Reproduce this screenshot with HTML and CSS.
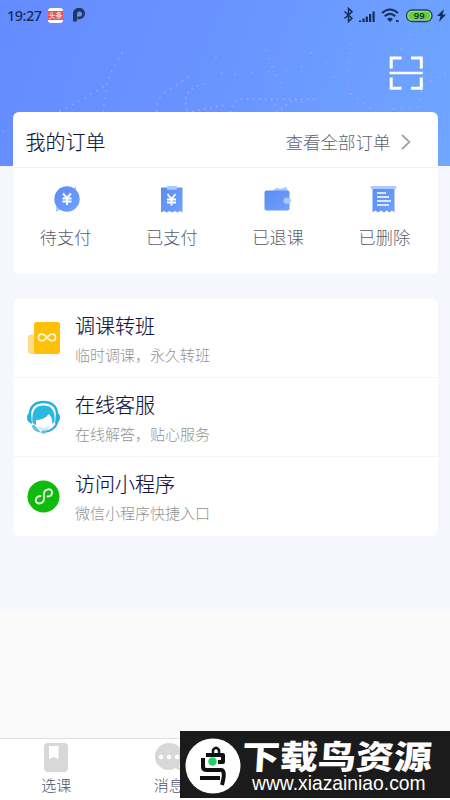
FILE: index.html
```html
<!DOCTYPE html>
<html lang="zh-CN">
<head>
<meta charset="utf-8">
<title>我的订单</title>
<link rel="stylesheet" href="styles.css">
</head>
<body>
<header class="hero">
  <svg class="sparkles" viewBox="0 0 450 166" aria-hidden="true">
    <g fill="none" stroke-linecap="round">
      <path class="pink" stroke-dasharray="0 7" d="M60 111Q84 99 106 85"/>
      <path class="pink" stroke-dasharray="0 7" d="M103 112L107 82L112 70L124 50"/>
      <path class="pink" stroke-dasharray="0 7" d="M157 111Q155 98 170 89L192 75"/>
      <path class="pink" stroke-dasharray="0 6" d="M187 110Q180 89 204 84M193 111L225 105"/>
      <path class="pink" stroke-dasharray="0 6" d="M231 112Q233 97 248 99H316M272 100L278 112L292 100L306 103"/>
      <path class="faint" stroke-dasharray="0 9" d="M266 50Q272 69 283 87M350 44L348 88"/>
      <path class="pink" stroke-dasharray="0 8" d="M351 94L372 109M394 109L418 107L423 84L449 72"/>
      <path class="faint" stroke-dasharray="0 17" d="M216 57L224 80M235 74L300 69L320 40M326 62L339 86M410 35L391 66L400 94M3 131L12 128"/>
    </g>
  </svg>
  <div class="status">
    <time>19:27</time>
    <span class="news">头条</span>
    <svg class="p-logo" viewBox="0 0 12 14"><path d="M0 13.500V6A6 5.800 0 1 1 6 11.300H4.500V8.500H6A2.500 2.500 0 1 0 4 6V13.500Z" fill="#223765"/></svg>
    <svg class="signals" viewBox="0 0 104 18">
      <g fill="none" stroke="#172d52" stroke-width="1.5">
        <path d="M1.500 5.500L9 12.200L5.500 15.500V2.500L9 5.800L1.500 12.500"/>
        <path d="M39 7Q47 0 55 7M41.700 10.200Q47 5.500 52.300 10.200" stroke-width="2"/>
      </g>
      <path fill="#172d52" d="M16 14.500h2.200V16H16zM19.400 12.500h2.200V16h-2.200zM22.700 10.500h2.200V16h-2.200zM26 8h2.200v8H26zM29.500 5.500h2.200V16h-2.200zM44 13Q47 10.500 50 13L47 16zM53 14h2.500v2H53zM101 3L94 10h3.500L96 16l7-7.500h-3.500z"/>
      <rect x="63.500" y="4" width="25.500" height="11.500" rx="5.500" fill="#a3cbb3" stroke="#23444f" stroke-width="1.300"/>
      <rect x="65.500" y="6" width="21.500" height="7.500" rx="3.700" fill="#62d329"/>
      <text x="76.200" y="13.400" text-anchor="middle">99</text>
    </svg>
  </div>
  <svg class="scan" viewBox="0 0 34 34" fill="none" stroke="#fff" stroke-width="3"><path d="M2.200 12.500V2H12.500M22 2H32.300V12.500M2.200 21.500V32.300H12.500M22 32.300H32.300V21.500"/><path d="M.5 17H33.800" stroke-width="2.600"/></svg>
</header>

<main>
  <section class="card orders">
    <div class="order-head">
      <h2>我的订单</h2>
      <a>查看全部订单<svg viewBox="0 0 10 16"><path d="M1 1L8.500 8L1 15" fill="none" stroke="#a2a3ad" stroke-width="1.800"/></svg></a>
    </div>
    <div class="order-grid">
      <div class="order">
        <svg viewBox="0 0 28 28"><path d="M24 1V9H18M4 17V27L11 23" fill="#a9cbff"/><circle cx="15" cy="14" r="12.700" fill="url(#blue)"/><path class="yen" d="M11 8.500L15 13L19 8.500M10.500 13.500H19.500M10.500 16.500H19.500M15 13V20"/></svg>
        <span>待支付</span>
      </div>
      <div class="order">
        <svg viewBox="0 0 28 28"><path d="M3 2.500H24.500V27.500L22 26L19.500 27.500L17 26L14 27.500L11.500 26L9 27.500L6 26L3 27.500Z" fill="url(#blue)"/><rect x="9" y="1" width="10" height="3.700" rx="1" fill="#a9cbff"/><path class="yen" d="M9.500 9L13.500 14L17.500 9M9 14.500H18M9 17.500H18M13.500 14V20.500"/></svg>
        <span>已支付</span>
      </div>
      <div class="order">
        <svg viewBox="0 0 28 28"><path d="M7 7L13 2.500L16 4L22 2L25 7Z" fill="#a9cbff"/><rect x=".5" y="5.500" width="25" height="20" rx="2" fill="url(#blue)"/><rect x="19.500" y="12.700" width="7.500" height="6" rx="3" fill="#a9cbff"/></svg>
        <span>已退课</span>
      </div>
      <div class="order">
        <svg viewBox="0 0 28 28"><path d="M2.500 2.500H24.500V27.500L22 25.500L19.500 27.500L17 25.500L14 27.500L11 25.500L8 27.500L5.500 25.500L2.500 27.500Z" fill="url(#blue)"/><rect x=".5" y="1" width="26" height="3" rx="1" fill="#a9cbff"/><path class="lines" d="M7 8H16M7 12H19M7 16H21M7 20H19"/></svg>
        <span>已删除</span>
      </div>
    </div>
  </section>

  <section class="card services">
    <article>
      <svg viewBox="0 0 34 34"><rect x="2" y="13.500" width="15" height="19.500" rx="3" fill="#ffdc8c"/><rect x="8" y="1" width="26" height="32" rx="2.500" fill="#ffc107"/><path d="M21 16.500C17 11.500 12.500 12.500 12.500 16.500S17 21.500 21 16.500C25 11.500 29.500 12.500 29.500 16.500S25 21.500 21 16.500Z" fill="none" stroke="#fff6cf" stroke-width="1.700"/></svg>
      <div><h3>调课转班</h3><p>临时调课，永久转班</p></div>
    </article>
    <article>
      <svg viewBox="0 0 34 34"><path d="M4 14C4 6 10 2 17.500 2S31 6 31 14" fill="none" stroke="#22b5de" stroke-width="2.500"/><path d="M6.500 23C5.500 11 9 5.500 17.500 5.500S29.500 11 28.500 22L26 24Q27 19 23 14Q18 20 10 20L10 25Z" fill="#2ab9e0"/><path d="M5 12Q1 13 1 17.500T6 24ZM30 12Q34 13 34 17.500T29 24Z" fill="#25b1db"/><path d="M5.500 26Q8 32 15 32.500L12 29L8 24.500Z" fill="#62c1e8"/><path d="M11 25.500Q17 30 24 25.500L22 30H14Z" fill="#c7edf8"/><path d="M31.500 22Q28.500 31 18 32" fill="none" stroke="#3aa9dc" stroke-width="2.200"/><ellipse cx="17.500" cy="32" rx="2.500" ry="1.700" fill="#62c1e8"/></svg>
      <div><h3>在线客服</h3><p>在线解答，贴心服务</p></div>
    </article>
    <article>
      <svg viewBox="0 0 34 34"><circle cx="17.500" cy="17.500" r="16" fill="#0fbb0c"/><path d="M14.500 17C8.500 17.500 8.500 24.500 13 24.500C16.500 24.500 18 22 18 19V15C18 9.500 26 8.500 26 13.500C26 16 24 17.500 21.500 17.500" fill="none" stroke="#efffed" stroke-width="1.800" stroke-linecap="round"/></svg>
      <div><h3>访问小程序</h3><p>微信小程序快捷入口</p></div>
    </article>
  </section>
</main>
<div class="blank"></div>
<nav>
  <a><svg viewBox="0 0 28 30"><rect x="2" y="0" width="24" height="29" rx="4" fill="#d8d8d8"/><path d="M7 3H16.500V16L11.700 14L7 16Z" fill="white"/></svg><span>选课</span></a>
  <a><svg viewBox="0 0 28 30"><path d="M14 0C6 0 0 6 0 13.500S6 27 14 27Q18 27 20 25L26 28L24 23C30 17 29 0 14 0Z" fill="#d8d8d8"/><path d="M6 14H6.100M14 14H14.100M22 14H22.100" stroke="white" stroke-width="4.500" stroke-linecap="round"/></svg><span>消息</span></a>
</nav>
<aside class="watermark">
  <svg viewBox="0 0 56 56"><circle cx="28" cy="28" r="27.500" fill="white"/><g fill="none" stroke="#111" stroke-width="4" stroke-linejoin="round"><path d="M28 16V12Q31 7.500 34 12V16" stroke-width="2.500"/><path d="M21 17H38V24H33M18 20V29Q18 32 22 32H36Q41 32 37 47M15 40H35"/></g><circle cx="27.500" cy="23.500" r="4.200" fill="#22cf63"/></svg>
  <div><strong>下载鸟资源</strong><small>www.xiazainiao.com</small></div>
</aside>
<svg class="defs"><defs><linearGradient id="blue" x1="0" y1="0" x2="1" y2="1"><stop stop-color="#5d8cf1"/><stop offset="1" stop-color="#6ea1ff"/></linearGradient></defs></svg>
</body>
</html>
```
FILE: styles.css
```css
* { box-sizing: border-box; }
body { margin: 0; width: 450px; height: 800px; overflow: hidden; position: relative; background: #f5f7fc; color: #10133c; font-family: "Noto Sans CJK SC", sans-serif; display: flex; flex-direction: column; }
svg { display: block; flex-shrink: 0; }
h2, h3, p { margin: 0; font-weight: 300; }
.hero { height: 166px; flex-shrink: 0; position: relative; background: linear-gradient(110deg, #648bff, #6995ff 50%, #6fa6ff); }
.sparkles { position: absolute; inset: 0; width: 450px; height: 166px; }
.pink { stroke: #b5a5f3; opacity: .75; stroke-width: 2; }
.faint { stroke: #a5b5fa; opacity: .5; stroke-width: 2; }
.status { height: 30px; display: flex; align-items: center; padding: 0 3px 0 7px; color: #172d52; position: relative; }
.status time { font: 500 14.5px/30px "Noto Sans", sans-serif; width: 41px; white-space: nowrap; letter-spacing: -.5px; }
.news { width: 15px; height: 15px; border: 1px solid #fff; border-width: 3px 0; border-radius: 3px; background: #e65158; color: white; font-size: 7px; line-height: 8px; text-align: center; }
.p-logo { width: 12px; height: 14px; margin-left: 10px; }
.signals { width: 104px; height: 18px; margin-left: auto; }
.signals text { font: 600 9.5px "Noto Sans"; fill: #172d52; }
.scan { position: absolute; left: 389px; top: 56px; width: 34px; height: 34px; }
main { position: relative; margin-top: -54px; height: 499px; flex-shrink: 0; padding: 0 12.5px; }
.card { width: 425px; background: white; border-radius: 6px; overflow: hidden; }
.orders { height: 162px; }
.order-head { height: 56px; border-bottom: 1px solid #f2f2f5; padding: 5px 27px 0 13px; display: flex; align-items: center; justify-content: space-between; }
h2 { font-size: 20px; line-height: 30px; -webkit-text-stroke: .15px #10133c; }
.order-head a { display: flex; align-items: center; gap: 10px; color: #62626f; font-size: 17.5px; line-height: 26px; font-weight: 300; }
.order-head svg { width: 10px; height: 16px; }
.order-grid { display: grid; grid-template-columns: repeat(4, 1fr); height: 106px; }
.order { display: flex; flex-direction: column; align-items: center; padding-top: 17px; color: #5c5c6a; }
.order svg { width: 28px; height: 28px; }
.order span { font-size: 17.2px; line-height: 25px; margin-top: 11px; font-weight: 300; }
.yen { fill: none; stroke: white; stroke-width: 1.9; }
.lines { stroke: white; stroke-width: 1.5; }
.services { margin-top: 25px; height: 237px; }
article { height: 79px; display: flex; padding: 12px 13.5px 0; border-bottom: 1px solid #f4f5f7; }
article:last-child { border: 0; }
article > svg { width: 34px; height: 34px; margin-top: 10px; }
article > div { margin-left: 15px; }
h3 { font-size: 20px; line-height: 29px; -webkit-text-stroke: .15px #10133c; }
p { font-size: 15px; line-height: 22px; margin-top: 4px; color: #929292; font-weight: 300; white-space: nowrap; }
.blank { height: 127px; flex-shrink: 0; background: #fafafa; }
nav { height: 62px; flex-shrink: 0; background: white; border-top: 1px solid #e0e0e0; display: grid; grid-template-columns: repeat(4, 1fr); padding-top: 4px; }
nav a { display: flex; flex-direction: column; align-items: center; color: #4d526a; font-size: 15px; line-height: 22px; font-weight: 300; }
nav svg { width: 28px; height: 30px; margin-bottom: 1px; }
.watermark { position: absolute; left: 180px; top: 731px; width: 270px; height: 67px; background: #1b1b1b; display: flex; align-items: center; padding-left: 5px; color: white; }
.watermark > svg { width: 56px; height: 56px; margin-top: 2px; }
.watermark div { width: 195px; margin-left: 1px; }
strong { display: block; font-size: 38px; line-height: 37px; font-weight: 800; height: 37px; transform: scaleY(.87) skewX(-3deg); white-space: nowrap; }
small { display: block; font: 19.3px/20px "Liberation Sans", sans-serif; padding-left: 10px; white-space: nowrap; margin-top: 1px; }
.defs { position: absolute; width: 0; height: 0; }
```
